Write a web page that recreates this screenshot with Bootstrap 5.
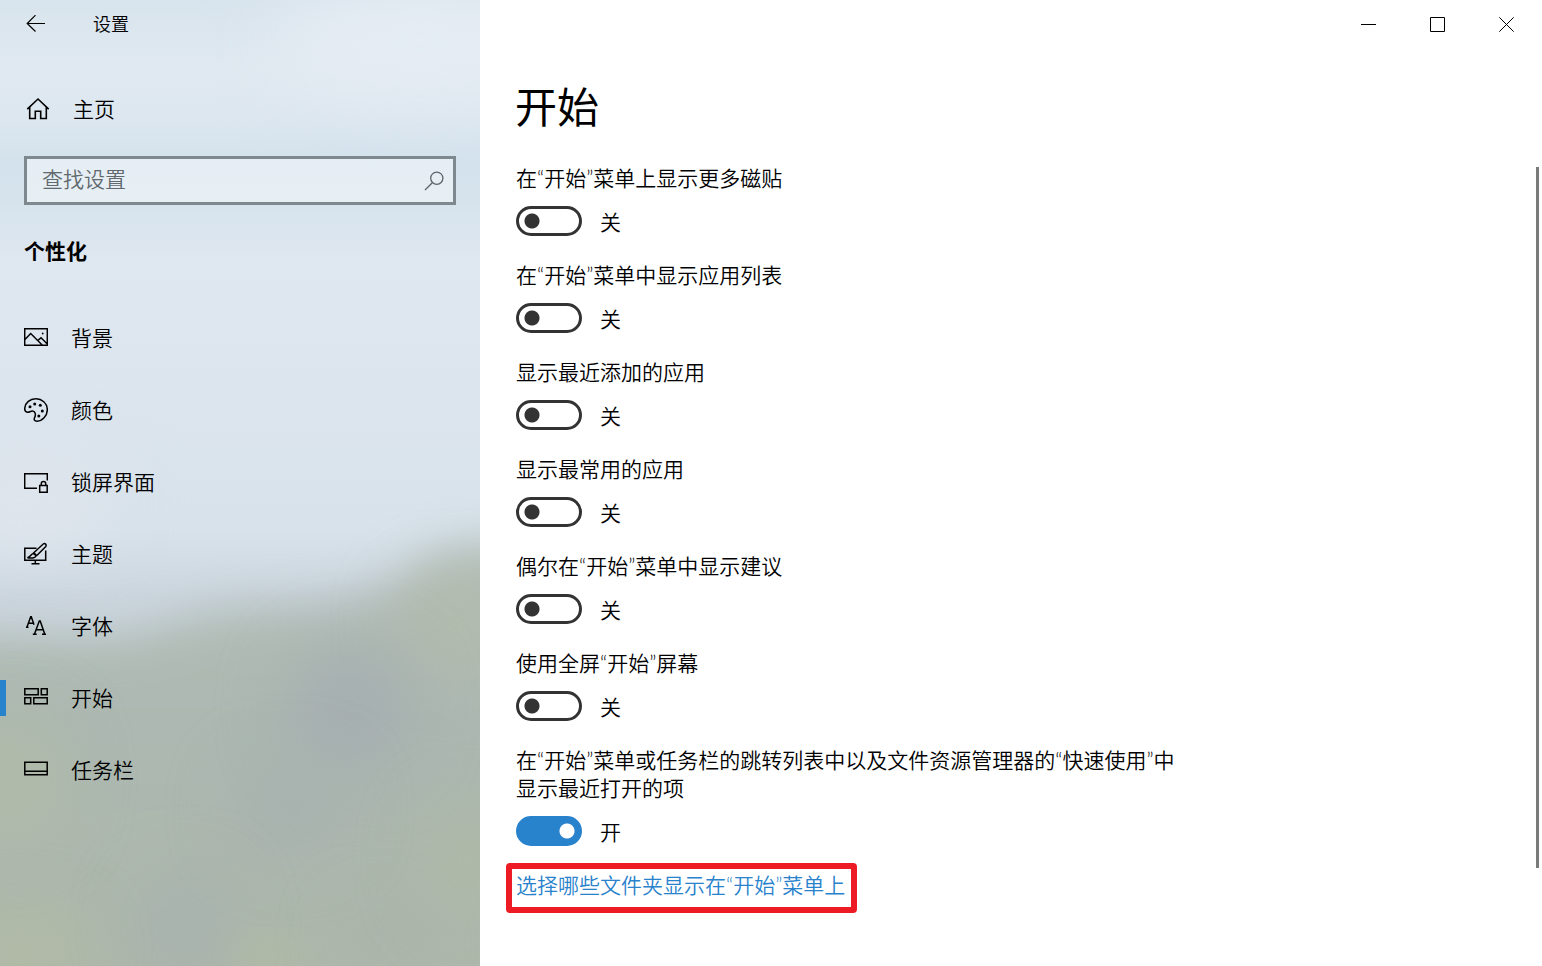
<!DOCTYPE html>
<html lang="zh-CN">
<head>
<meta charset="utf-8">
<meta name="viewport" content="width=device-width, initial-scale=1">
<title>设置</title>
<link href="https://cdn.jsdelivr.net/npm/bootstrap@5.3.0/dist/css/bootstrap.min.css" rel="stylesheet">
<style>
  :root { --accent: #2982cc; --ink: #333; }
  body {
    font-family: Lato, "Noto Sans CJK SC", sans-serif;
    font-size: 21px; line-height: 28px; font-weight: 350; color: #000; background: #fff;
  }
  .side-pane { flex: 0 0 480px; overflow: hidden; background: #dde6ef; }
  .side-photo { z-index: 0; }
  .side-content { z-index: 1; }
  .bar-height { height: 48px; }
  .glyph { fill: none; stroke: #000; flex: none; display: block; }
  .back-btn { width: 72px; background: none; border: 0; padding: 0 0 0 26px; }
  .bar-title { font-size: 18px; padding-left: 21px; }
  .home-link { margin-top: 37px; padding-left: 26px; gap: 23px; color: #000; }
  .search-box {
    height: 49px; margin: 23px 24px 0; border: 3px solid #7e888f;
    background: rgba(255,255,255,.42); padding: 0 9px 0 15px;
  }
  .search-box input { font: inherit; line-height: 28px; border: 0; outline: 0; background: none; padding: 0 0 3px; min-width: 0; }
  .search-box input::placeholder { color: #62696e; opacity: 1; }
  .search-box button { border: 0; background: none; padding: 0; }
  .search-box .glyph { stroke: #5d656a; }
  .group-title { font-size: 21px; line-height: 28px; margin: 32px 24px 0; font-weight: 700; }
  .side-nav { margin-top: 37px; }
  .side-nav a { height: 72px; padding-left: 18px; gap: 23px; color: #000; border-left: 6px solid transparent; }
  .side-nav a.active { border-image: linear-gradient(transparent 25%, var(--accent) 25%, var(--accent) 75%, transparent 75%) 0 0 0 6; }
  .win-controls { padding-right: 1px; }
  .win-btn { width: 69px; border: 0; background: none; padding: 0; }
  .page-title { font-size: 42px; line-height: 56px; font-weight: 400; margin: 31px 0 29px 35px; }
  .settings { padding-left: 36px; }
  .setting { margin-bottom: 25px; }
  .setting > label { max-width: 670px; margin-bottom: 14px; }
  .switch-row { gap: 18px; height: 30px; }
  .switch-row span { padding-top: 2px; }
  .switch-row .form-check-input {
    width: 66px; height: 30px; margin: 0; border: 3px solid var(--ink); border-radius: 15px;
    background: radial-gradient(circle at 13px 12px, var(--ink) 7px, transparent 8px) #fff;
  }
  .switch-row .form-check-input:checked {
    border-color: var(--accent);
    background: radial-gradient(circle at 48px 12px, #fff 7px, transparent 8px) border-box var(--accent);
    background-origin: padding-box;
  }
  .setting-last { margin-bottom: 17px; }
  .marked-link { margin-left: -10px; border: 6px solid #ed1c24; border-radius: 4px; padding: 2px 6px 8px 4px; color: var(--accent); }
  .scroll-thumb { width: 3px; height: calc(100% - 101px); margin: 3px 3px 0 0; background: #7a7a7a; }
  @media (max-width: 900px) { .side-pane { flex-basis: 280px; } }
</style>
</head>
<body>
<div class="d-flex min-vh-100">

  <aside class="side-pane position-relative">
    <!-- Acrylic backdrop: soft sky over soft hills -->
    <svg class="side-photo position-absolute top-0 start-0 w-100 h-100" viewBox="0 0 480 966" preserveAspectRatio="none" color-interpolation-filters="sRGB" aria-hidden="true">
      <defs>
        <linearGradient id="sky" x1="0" y1="0" x2="0" y2="1">
          <stop offset="0" stop-color="#d8e4ed"/><stop offset=".07" stop-color="#e0e9f1"/>
          <stop offset=".12" stop-color="#dde7f0"/><stop offset=".17" stop-color="#d3e2ec"/>
          <stop offset=".21" stop-color="#d6e3ed"/><stop offset=".27" stop-color="#dfe7f0"/>
          <stop offset=".42" stop-color="#dce5ee"/><stop offset=".55" stop-color="#d7e2ea"/>
          <stop offset=".62" stop-color="#ccd6df"/>
        </linearGradient>
        <linearGradient id="land" x1="0" y1="0" x2="0" y2="1">
          <stop offset="0" stop-color="#b3beb7"/><stop offset=".35" stop-color="#acb8b1"/>
          <stop offset="1" stop-color="#afb8a8"/>
        </linearGradient>
        <filter id="soft" x="-50%" y="-50%" width="200%" height="200%"><feGaussianBlur stdDeviation="22"/></filter>
        <filter id="wide" x="-150%" y="-150%" width="400%" height="400%"><feGaussianBlur stdDeviation="34"/></filter>
      </defs>
      <rect width="480" height="966" fill="url(#sky)"/>
      <ellipse cx="420" cy="40" rx="150" ry="50" fill="#e6edf4" filter="url(#wide)"/>
      <ellipse cx="20" cy="500" rx="90" ry="50" fill="#dfe5ed" filter="url(#wide)"/>
      <path d="M-100 634 L120 636 L220 610 L330 604 L390 590 L440 552 L600 530 V1100 H-100Z" fill="url(#land)" filter="url(#soft)"/>
      <ellipse cx="455" cy="625" rx="50" ry="40" fill="#b3bbaa" filter="url(#wide)"/>
      <ellipse cx="350" cy="710" rx="60" ry="60" fill="#a5aeb1" filter="url(#wide)"/>
      <ellipse cx="290" cy="810" rx="50" ry="40" fill="#a6b0b0" filter="url(#wide)"/>
      <ellipse cx="10" cy="780" rx="50" ry="60" fill="#b1bba8" filter="url(#wide)"/>
      <ellipse cx="185" cy="930" rx="40" ry="50" fill="#a5b0af" filter="url(#wide)"/>
      <ellipse cx="380" cy="945" rx="30" ry="30" fill="#a7b1ab" filter="url(#wide)"/>
      <ellipse cx="20" cy="950" rx="60" ry="30" fill="#b4bca3" filter="url(#wide)"/>
      <ellipse cx="265" cy="955" rx="30" ry="14" fill="#b5bda2" filter="url(#soft)"/>
      <ellipse cx="470" cy="860" rx="40" ry="50" fill="#aeb9a6" filter="url(#wide)"/>
    </svg>

    <div class="side-content position-relative">
      <div class="bar-height d-flex align-items-center">
        <button class="back-btn bar-height" type="button" aria-label="返回">
          <svg class="glyph" width="20" height="18" viewBox="0 0 20 18" stroke-width="1.2"><path d="M19 8.500H1.500M9.500.2 1.200 8.500l8.300 8"/></svg>
        </button>
        <span class="bar-title">设置</span>
      </div>

      <a class="home-link bar-height d-flex align-items-center text-decoration-none" href="#home">
        <svg class="glyph" width="24" height="24" viewBox="0 0 24 24" stroke-width="1.6"><path d="M1.300 12.200 12 2l10.700 10.200M3.700 10.200V21.500H9.300V14.200H14.700V21.500H20.300V10.200"/></svg>
        主页
      </a>

      <form class="search-box d-flex align-items-center" role="search">
        <input class="flex-grow-1" type="search" placeholder="查找设置" aria-label="查找设置">
        <button type="button" aria-label="搜索">
          <svg class="glyph" width="20" height="20" viewBox="0 0 20 20" stroke-width="1.3"><circle cx="12.800" cy="7.200" r="6.100"/><path d="M8.300 11.700 1 19"/></svg>
        </button>
      </form>

      <h2 class="group-title">个性化</h2>

      <nav class="side-nav d-flex flex-column" aria-label="个性化">
        <a class="d-flex align-items-center text-decoration-none" href="#background">
          <svg class="glyph" width="24" height="24" viewBox="0 0 24 24" stroke-width="1.5"><path d="M.7 2.700H23.300V19.300H.7ZM.7 13.800 6.700 7.500 18.200 19M13.700 14.500 17 11.800 23.300 18"/><circle cx="18.700" cy="7.500" r=".9" fill="#000" stroke="none"/></svg>
          背景
        </a>
        <a class="d-flex align-items-center text-decoration-none" href="#colors">
          <svg class="glyph" width="24" height="24" viewBox="0 0 24 24" stroke-width="1.5"><path d="M11.500.8C17.800.5 23.300 5.200 23.300 11.700 23.300 18 18.200 23.300 13 23.200 10.300 23.100 9.700 21.700 10.700 19.400 12.100 16.300 11.200 13.300 8.500 13.100 6.300 13 5.200 14.700 3.400 14.300 1.500 13.900.5 12.300.8 9.800 1.400 4.700 6 .9 11.500.8Z"/><g fill="#000" stroke="none"><circle cx="6" cy="8.700" r="1.500"/><circle cx="10.700" cy="6" r="1.500"/><circle cx="16.300" cy="7.200" r="1.500"/><circle cx="18.300" cy="13" r="1.500"/><circle cx="14.800" cy="18" r="1.500"/></g></svg>
          颜色
        </a>
        <a class="d-flex align-items-center text-decoration-none" href="#lockscreen">
          <svg class="glyph" width="24" height="24" viewBox="0 0 24 24" stroke-width="1.5"><path d="M13 18.300H.7V3.700H23.300V10.500M15.700 15.500H23.200V22.300H15.700ZM17.300 15.500V13.500C17.300 10.700 21.700 10.700 21.700 13.500V15.500"/></svg>
          锁屏界面
        </a>
        <a class="d-flex align-items-center text-decoration-none" href="#themes">
          <svg class="glyph" width="24" height="24" viewBox="0 0 24 24" stroke-width="1.5"><path d="M12.500 6.200H.8V18.200H21.700V8.500M11.300 18.200V21.500M7.500 21.700H15.500M3.300 15.500C6.500 15.800 6.500 11.700 9.500 11.500 13 12 12.500 15 9.800 15.700 7.500 16.300 5.300 16.200 3.300 15.500ZM9 11.500 19.200 2C21 .8 23 2.700 21.800 4.500L12.300 14M9.500 11.500 12.300 14"/></svg>
          主题
        </a>
        <a class="d-flex align-items-center text-decoration-none" href="#fonts">
          <svg class="glyph" width="24" height="24" viewBox="0 0 24 24" stroke-width="1.5"><path d="M3 13 6.700 2.800H7.300L10 10.800M4.300 9.200H9.400M2 13.300H4.500M10.500 20 15.300 7H16.200L20.700 20M12.300 15.700H19M8.800 20.300H12.700M18 20.300H22"/></svg>
          字体
        </a>
        <a class="active d-flex align-items-center text-decoration-none" href="#start" aria-current="page">
          <svg class="glyph" width="24" height="24" viewBox="0 0 24 24" stroke-width="1.500"><path d="M.8 2.800H14.200V8.700H.8ZM17.300 2.800H23.200V8.700H17.300ZM.8 11.800H6.700V17.700H.8ZM9.800 11.800H23.200V17.700H9.800Z"/></svg>
          开始
        </a>
        <a class="d-flex align-items-center text-decoration-none" href="#taskbar">
          <svg class="glyph" width="24" height="24" viewBox="0 0 24 24" stroke-width="1.500"><path d="M.8 4.300H23.200V16.700H.8ZM.8 13.300H23.200"/></svg>
          任务栏
        </a>
      </nav>
    </div>
  </aside>

  <main class="flex-grow-1 d-flex flex-column">
    <div class="win-controls d-flex justify-content-end">
      <button class="win-btn bar-height d-flex align-items-center justify-content-center" type="button" aria-label="最小化">
        <svg class="glyph" width="15" height="15" viewBox="0 0 15 15"><path d="M0 7.500H15"/></svg>
      </button>
      <button class="win-btn bar-height d-flex align-items-center justify-content-center" type="button" aria-label="最大化">
        <svg class="glyph" width="15" height="15" viewBox="0 0 15 15"><path d="M.5.5H14.500V14.500H.5Z"/></svg>
      </button>
      <button class="win-btn bar-height d-flex align-items-center justify-content-center" type="button" aria-label="关闭">
        <svg class="glyph" width="15" height="15" viewBox="0 0 15 15"><path d="M.3.3 14.700 14.700M14.700.3.3 14.700"/></svg>
      </button>
    </div>

    <h1 class="page-title">开始</h1>

    <div class="flex-grow-1 d-flex justify-content-between">
      <div class="settings">
        <div class="setting">
          <label class="d-block" for="s1">在“开始”菜单上显示更多磁贴</label>
          <div class="switch-row d-flex align-items-center"><input class="form-check-input" type="checkbox" role="switch" id="s1"><span>关</span></div>
        </div>
        <div class="setting">
          <label class="d-block" for="s2">在“开始”菜单中显示应用列表</label>
          <div class="switch-row d-flex align-items-center"><input class="form-check-input" type="checkbox" role="switch" id="s2"><span>关</span></div>
        </div>
        <div class="setting">
          <label class="d-block" for="s3">显示最近添加的应用</label>
          <div class="switch-row d-flex align-items-center"><input class="form-check-input" type="checkbox" role="switch" id="s3"><span>关</span></div>
        </div>
        <div class="setting">
          <label class="d-block" for="s4">显示最常用的应用</label>
          <div class="switch-row d-flex align-items-center"><input class="form-check-input" type="checkbox" role="switch" id="s4"><span>关</span></div>
        </div>
        <div class="setting">
          <label class="d-block" for="s5">偶尔在“开始”菜单中显示建议</label>
          <div class="switch-row d-flex align-items-center"><input class="form-check-input" type="checkbox" role="switch" id="s5"><span>关</span></div>
        </div>
        <div class="setting">
          <label class="d-block" for="s6">使用全屏“开始”屏幕</label>
          <div class="switch-row d-flex align-items-center"><input class="form-check-input" type="checkbox" role="switch" id="s6"><span>关</span></div>
        </div>
        <div class="setting setting-last">
          <label class="d-block" for="s7">在“开始”菜单或任务栏的跳转列表中以及文件资源管理器的“快速使用”中显示最近打开的项</label>
          <div class="switch-row d-flex align-items-center"><input class="form-check-input" type="checkbox" role="switch" id="s7" checked><span>开</span></div>
        </div>
        <a class="marked-link d-inline-block text-decoration-none" href="#folders">选择哪些文件夹显示在“开始”菜单上</a>
      </div>
      <div class="scroll-thumb flex-shrink-0" aria-hidden="true"></div>
    </div>
  </main>
</div>
<script src="https://cdn.jsdelivr.net/npm/bootstrap@5.3.0/dist/js/bootstrap.bundle.min.js"></script>
</body>
</html>
